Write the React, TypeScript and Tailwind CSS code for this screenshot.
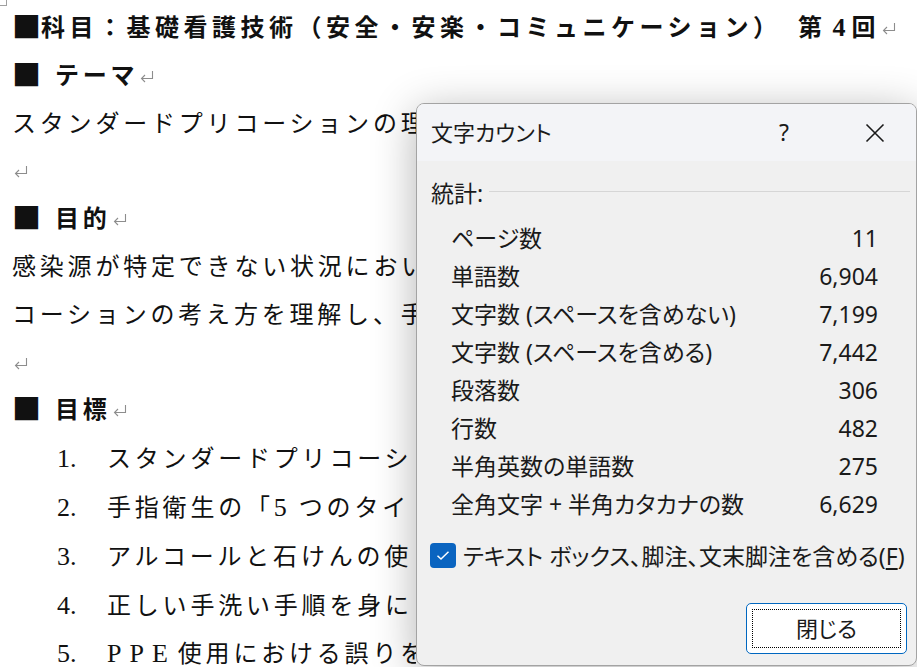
import React from 'react'

const docFont = { fontFamily: '"Liberation Serif", "Noto Sans CJK JP", serif' }
const cjkFont = { fontFamily: '"Noto Sans CJK JP", sans-serif' }
const uiFont = { fontFamily: '"Noto Sans", "Noto Sans CJK JP", sans-serif' }

function Ret() {
    return (
        <svg width="16" height="13" viewBox="0 0 16 13" className="inline-block align-middle ml-[1px] -mt-[4px]">
            <path d="M13.5 1 V8.5 H2.5 M6 5 L2.5 8.5 L6 12" fill="none" stroke="#8d8d8d" strokeWidth="1.1" />
        </svg>
    )
}

function Square() {
    return (
        <span className="text-[29px] leading-none tracking-normal align-[-2px]" style={cjkFont}>■</span>
    )
}

function Heading({ text }: { text: string }) {
    return (
        <div className="font-bold">
            <Square />
            <span className="ml-[14px]">{text}</span>
            <Ret />
        </div>
    )
}

function Item({ n, children }: { n: string; children: React.ReactNode }) {
    return (
        <div className="flex items-baseline pl-[45px]">
            <span className="w-[50px] shrink-0 text-[26px] tracking-normal">{n}</span>
            <span className="shrink-0">{children}</span>
        </div>
    )
}

const stats: [string, string][] = [
    ['ページ数', '11'],
    ['単語数', '6,904'],
    ['文字数 (スペースを含めない)', '7,199'],
    ['文字数 (スペースを含める)', '7,442'],
    ['段落数', '306'],
    ['行数', '482'],
    ['半角英数の単語数', '275'],
    ['全角文字 + 半角カタカナの数', '6,629'],
]

function WordCountDialog() {
    return (
        <div
            className="absolute left-[416px] top-[103px] w-[501px] h-[563px] rounded-[8px] border border-[#a3a3a3] bg-[#f0f0f0] overflow-hidden flex flex-col text-[#1a1a1a] shadow-[0_8px_44px_rgba(0,0,0,0.3)] [font-feature-settings:'palt']"
            style={uiFont}
        >
            {/* title bar */}
            <div className="h-[57px] shrink-0 bg-[#f3f4f7] flex items-center pl-[14px]">
                <span className="text-[22px]">文字カウント</span>
                <div className="flex-1" />
                <div className="w-[90px] text-center text-[23px]">?</div>
                <div className="w-[5px]" />
                <div className="w-[82px] flex justify-center">
                    <svg width="20" height="20" viewBox="0 0 20 20">
                        <path d="M1.5 1.5 L18.5 18.5 M18.5 1.5 L1.5 18.5" stroke="#1a1a1a" strokeWidth="1.6" />
                    </svg>
                </div>
            </div>

            <div className="flex flex-col">
                <div className="mt-[20px] h-[24px] pl-[14px] pr-[6px] flex items-center">
                    <span className="text-[23px] leading-[24px]">統計:</span>
                    <div className="flex-1 ml-[6px] -mt-[4px] border-t border-[#d6d6d6]" />
                </div>

                <div className="mt-[14px] pl-[34px] pr-[38px]">
                    {stats.map(([label, value]) => (
                        <div key={label} className="h-[38px] flex items-center justify-between text-[23px] leading-[28px]">
                            <span>{label}</span>
                            <span>{value}</span>
                        </div>
                    ))}
                </div>

                <div className="mt-[20px] h-[25px] pl-[13px] flex items-center gap-[7px]">
                    <div className="w-[26px] h-[25px] rounded-[4px] bg-[#0a64c0] flex items-center justify-center">
                        <svg width="14" height="11" viewBox="0 0 14 11">
                            <path d="M1.5 5.8 L5 9 L12.5 1.8" fill="none" stroke="white" strokeWidth="1.5" />
                        </svg>
                    </div>
                    <span className="text-[23px] leading-[28px]">
                        テキスト ボックス、脚注、文末脚注を含める(<span className="underline underline-offset-[3px]">F</span>)
                    </span>
                </div>

                <div className="mt-[35px] self-end mr-[9px] w-[161px] h-[51px] rounded-[5px] border-[1.5px] border-[#0067c0] bg-white relative flex items-center justify-center">
                    <div className="absolute inset-[5px] border border-dotted border-black" />
                    <span className="text-[22px]">閉じる</span>
                </div>
            </div>
        </div>
    )
}

export default function App() {
    return (
        <div className="relative w-[917px] h-[667px] overflow-hidden bg-white">
            <div className="absolute left-0 top-0 w-[7px] h-[6px] border-r border-b border-[#a0a0a0]" />

            <div
                className="pt-[4px] pl-[12px] text-[24px] leading-[47.8px] tracking-[3.8px] whitespace-nowrap text-[#111]"
                style={docFont}
            >
                <div className="font-bold tracking-[4.5px]">
                    <Square />科目：基礎看護技術（安全・安楽・コミュニケーション）　第<span className="mx-[6px] text-[26px] tracking-normal">4</span>回
                    <Ret />
                </div>
                <Heading text="テーマ" />

                {/* page text below this point sits under the dialog */}
                <div className="w-[404px] overflow-hidden">
                    <div>スタンダードプリコーションの理</div>
                    <div><Ret /></div>
                    <Heading text="目的" />
                    <div>感染源が特定できない状況におい</div>
                    <div>コーションの考え方を理解し、手</div>
                    <div><Ret /></div>
                    <Heading text="目標" />
                    <Item n="1.">スタンダードプリコーシ</Item>
                    <Item n="2.">手指衛生の「<span className="inline-block text-[26px] tracking-normal mr-[12px]">5</span>つのタイ</Item>
                    <Item n="3.">アルコールと石けんの使</Item>
                    <Item n="4.">正しい手洗い手順を身に</Item>
                    <Item n="5.">
                        <span className="text-[26px] tracking-[8px] mr-[2px]">PPE</span>使用における誤りを
                    </Item>
                </div>
            </div>

            <WordCountDialog />
        </div>
    )
}
